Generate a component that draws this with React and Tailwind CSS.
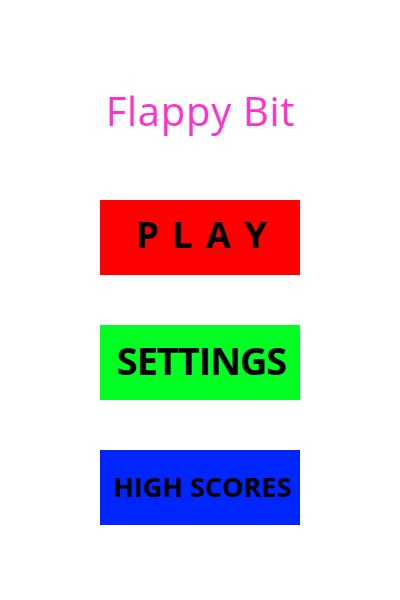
export default function App() {
  return (
    <div className="w-[400px] h-[600px] bg-white flex flex-col items-center" style={{ fontFamily: '"Open Sans", "Noto Sans", sans-serif' }}>
      <div className="mt-[83px] h-[56px] flex items-center justify-center pl-[1px] text-[40px] leading-none text-[#ff33cc] tracking-[0.7px]">
        Flappy Bit
      </div>
      <div className="mt-[61px] flex flex-col gap-[50px]">
        <div className="w-[200px] h-[75px] bg-[#ff0000] flex items-center justify-center pl-[16px] pb-[6px]">
          <span className="text-[36px] font-bold text-black tracking-[13.5px] leading-none">PLAY</span>
        </div>
        <div className="w-[200px] h-[75px] bg-[#00ff22] flex items-center justify-center pl-[3px] pb-[6px]">
          <span className="text-[38px] font-bold text-black tracking-[-1.1px] leading-none">SETTINGS</span>
        </div>
        <div className="w-[200px] h-[75px] bg-[#0026ff] flex items-center justify-center pl-[5px] pb-[2px]">
          <span className="text-[27px] font-bold text-black tracking-[0px] leading-none">HIGH SCORES</span>
        </div>
      </div>
    </div>
  );
}
